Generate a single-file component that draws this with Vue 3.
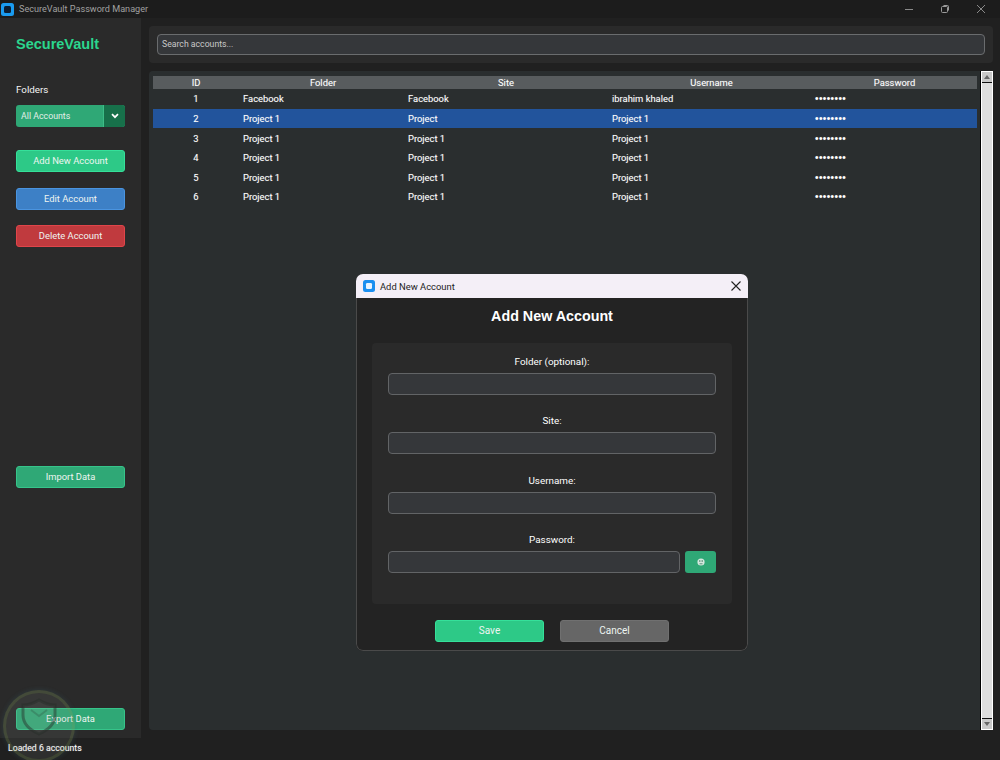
<script setup>
const rows = [
  { id: 1, folder: 'Facebook', site: 'Facebook', user: 'ibrahim khaled' },
  { id: 2, folder: 'Project 1', site: 'Project', user: 'Project 1', selected: true },
  { id: 3, folder: 'Project 1', site: 'Project 1', user: 'Project 1' },
  { id: 4, folder: 'Project 1', site: 'Project 1', user: 'Project 1' },
  { id: 5, folder: 'Project 1', site: 'Project 1', user: 'Project 1' },
  { id: 6, folder: 'Project 1', site: 'Project 1', user: 'Project 1' }
]
const fields = ['Folder (optional):', 'Site:', 'Username:']
</script>

<template>
  <div class="window">
    <header class="titlebar">
      <svg class="app-icon" width="13" height="13" viewBox="0 0 13 13">
        <rect width="13" height="13" rx="2.5" fill="#1a9bf0" />
        <rect x="3" y="3" width="7" height="7" rx="1.5" fill="#0b1e33" />
      </svg>
      <span class="title-text">SecureVault Password Manager</span>
      <div class="win-controls">
        <svg width="10" height="10" viewBox="0 0 10 10"><path d="M1 5.5h8" stroke="#8a8a8a" /></svg>
        <svg width="10" height="10" viewBox="0 0 10 10" fill="none" stroke="#9a9a9a"><rect x="1.5" y="2.5" width="6" height="6" rx="1" /><path d="M3.5 1.5h4a1 1 0 0 1 1 1v4" /></svg>
        <svg width="10" height="10" viewBox="0 0 10 10"><path d="M1 1l8 8M9 1l-8 8" stroke="#8a8a8a" /></svg>
      </div>
    </header>

    <div class="body">
      <aside class="sidebar">
        <h1 class="brand">SecureVault</h1>
        <div class="folders-label">Folders</div>
        <div class="combo">
          <span class="combo-text">All Accounts</span>
          <span class="combo-arrow">
            <svg width="8" height="6" viewBox="0 0 8 6"><path d="M1 1.2l3 3 3-3" fill="none" stroke="#fff" stroke-width="1.7" /></svg>
          </span>
        </div>
        <button class="btn side-btn green">Add New Account</button>
        <button class="btn side-btn blue">Edit Account</button>
        <button class="btn side-btn red">Delete Account</button>
        <button class="btn side-btn teal import">Import Data</button>
        <button class="btn side-btn teal export">Export Data</button>
      </aside>

      <main class="main">
        <div class="search-panel">
          <div class="search">Search accounts...</div>
        </div>
        <div class="table-panel">
          <div class="table">
            <div class="row head">
              <span class="c-id">ID</span>
              <span class="c-folder">Folder</span>
              <span class="c-site">Site</span>
              <span class="c-user">Username</span>
              <span class="c-pass">Password</span>
            </div>
            <div v-for="r in rows" :key="r.id" class="row" :class="{ selected: r.selected }">
              <span class="c-id">{{ r.id }}</span>
              <span class="c-folder">{{ r.folder }}</span>
              <span class="c-site">{{ r.site }}</span>
              <span class="c-user">{{ r.user }}</span>
              <span class="c-pass dots">••••••••</span>
            </div>
          </div>
          <div class="scrollbar">
            <span class="sb-btn"><i class="tri up"></i></span>
            <span class="sb-track"></span>
            <span class="sb-btn"><i class="tri down"></i></span>
          </div>
        </div>
      </main>
    </div>

    <footer class="status">Loaded 6 accounts</footer>

    <section class="dialog">
      <div class="dlg-title">
        <svg width="12" height="12" viewBox="0 0 12 12">
          <rect width="12" height="12" rx="2.5" fill="#1a8ff0" />
          <rect x="3" y="3" width="6" height="6" rx="1.2" fill="#e8f4ff" />
        </svg>
        <span>Add New Account</span>
        <svg class="dlg-close" width="10" height="10" viewBox="0 0 10 10"><path d="M.5.5l9 9M9.5.5l-9 9" stroke="#222" stroke-width="1.1" /></svg>
      </div>
      <div class="dlg-body">
        <h2 class="dlg-heading">Add New Account</h2>
        <div class="form">
          <div v-for="f in fields" :key="f" class="field">
            <label>{{ f }}</label>
            <div class="input"></div>
          </div>
          <div class="field">
            <label>Password:</label>
            <div class="pw-row">
              <div class="input"></div>
              <button class="eye">
                <svg width="8" height="8" viewBox="0 0 8 8">
                  <circle cx="4" cy="4" r="3.6" fill="#d5e8df" />
                  <circle cx="2.8" cy="3" r=".8" fill="#3d7a62" />
                  <circle cx="5.2" cy="3" r=".8" fill="#3d7a62" />
                  <path d="M2.5 5.800h3" stroke="#3d7a62" stroke-width=".8" />
                </svg>
              </button>
            </div>
          </div>
        </div>
        <div class="dlg-actions">
          <button class="btn dlg-btn green">Save</button>
          <button class="btn dlg-btn gray">Cancel</button>
        </div>
      </div>
    </section>

    <div class="watermark">
      <svg width="40" height="38" viewBox="0 0 40 38">
        <path d="M20 2c5 3 11 5 16 5v10c0 9-7 15-16 19C11 32 4 26 4 17V7c5 0 11-2 16-5z" fill="rgba(200,210,200,.05)" stroke="#262c28" stroke-opacity=".45" stroke-width="3" />
        <path d="M12 12l8 6 8-6" fill="none" stroke="#262c28" stroke-opacity=".22" stroke-width="2" />
      </svg>
    </div>
  </div>
</template>

<style>
html, body { margin: 0; background: #202020; }
</style>

<style scoped>
.window {
  position: relative;
  width: 1000px;
  height: 760px;
  overflow: hidden;
  display: flex;
  flex-direction: column;
  background: #202020;
  color: #fff;
  font-family: Roboto, "Liberation Sans", sans-serif;
  font-size: 10px;
}
.titlebar {
  height: 18px;
  flex: none;
  display: flex;
  align-items: center;
  gap: 5px;
  padding-left: 1px;
  background: #1c1c1c;
  color: #a0a0a0;
  font-size: 9.1px;
}
.app-icon { flex: none; }
.win-controls {
  margin-left: auto;
  display: flex;
  gap: 26px;
  padding-right: 14px;
}
.body {
  flex: 1;
  min-height: 0;
  display: flex;
}
.sidebar {
  width: 141px;
  flex: none;
  box-sizing: border-box;
  padding: 17px 16px 8px;
  display: flex;
  flex-direction: column;
  background: #2a2a2a;
}
.brand {
  margin: 0;
  font: bold 14.500px/18px "Liberation Sans", sans-serif;
  color: #2bd68e;
}
.folders-label {
  margin-top: 31px;
  font-size: 9.8px;
  line-height: 12px;
  color: #f4f4f4;
}
.combo {
  margin-top: 9px;
  height: 22px;
  display: flex;
  border-radius: 3px;
  overflow: hidden;
  background: #2fa876;
}
.combo-text {
  flex: 1;
  padding-left: 5px;
  line-height: 22px;
  font-size: 8.8px;
  color: #e3efe9;
  border-right: 1px solid #3dbd87;
}
.combo-arrow {
  width: 21px;
  display: flex;
  align-items: center;
  justify-content: center;
  background: #17704a;
}
.btn {
  box-sizing: border-box;
  border-radius: 3px;
  padding: 0;
  font: inherit;
  color: #eef5f1;
}
.side-btn { height: 22px; width: 109px; font-size: 9.4px; padding-bottom: 2px; }
.green { background: #2dc987; border: 1px solid #35e09a; }
.blue { background: #3d80c6; border: 1px solid #4a94e0; }
.red { background: #c03a3e; border: 1px solid #e0454a; }
.teal { background: #2fa876; border: 1px solid #36c48a; }
.gray { background: #666; border: 1px solid #707070; }
.green.side-btn { margin-top: 23px; }
.blue.side-btn { margin-top: 16px; }
.red.side-btn { margin-top: 15px; }
.import { margin-top: 219px; }
.export { margin-top: auto; }

.main {
  flex: 1;
  min-width: 0;
  box-sizing: border-box;
  padding: 8px 7px 8px 8px;
  display: flex;
  flex-direction: column;
  gap: 8px;
}
.search-panel {
  height: 37px;
  flex: none;
  box-sizing: border-box;
  padding: 8px;
  border-radius: 4px;
  background: #2a2a2a;
}
.search {
  height: 21px;
  box-sizing: border-box;
  padding-left: 4px;
  line-height: 19px;
  font-size: 8.7px;
  color: #c8c8c8;
  background: #35373a;
  border: 1px solid #6a6c6e;
  border-radius: 4px;
}
.table-panel {
  flex: 1;
  min-height: 0;
  display: flex;
  border-radius: 4px 0 0 4px;
  background: #2a2e2f;
}
.table {
  flex: 1;
  min-width: 0;
  padding: 5px 4px 0;
}
.row {
  height: 19.6px;
  box-sizing: border-box;
  padding-top: .3px;
  display: flex;
  align-items: center;
  font-size: 9.4px;
  text-shadow: 0 0 1px rgba(255, 255, 255, .35);
}
.row.head {
  height: 13px;
  padding-top: 0;
  background: #585c5e;
}
.row.selected { background: #22549c; }
.c-id { width: 90px; flex: none; text-align: center; padding-right: 4px; box-sizing: border-box; }
.c-folder { width: 165px; flex: none; }
.c-site { width: 204px; flex: none; }
.c-user { width: 203px; flex: none; }
.c-pass { flex: 1; }
.head span { text-align: center; }
.head .c-folder { padding-right: 5px; box-sizing: border-box; }
.head .c-site { padding-right: 8px; box-sizing: border-box; }
.head .c-user { padding-right: 4px; box-sizing: border-box; }
.head .c-pass { padding-right: 3px; box-sizing: border-box; }
.dots { font: 10px "Liberation Sans", sans-serif; letter-spacing: .4px; }
.scrollbar {
  width: 12px;
  flex: none;
  box-sizing: border-box;
  display: flex;
  flex-direction: column;
  gap: 1px;
  background: #111;
  border: 1px solid #fff;
  box-shadow: -1px 0 0 #000;
}
.sb-btn {
  height: 10px;
  flex: none;
  display: flex;
  align-items: center;
  justify-content: center;
  background: #c8c8c8;
}
.sb-track { flex: 1; background: #dedede; }
.tri { width: 0; height: 0; border-left: 3px solid transparent; border-right: 3px solid transparent; }
.tri.up { border-bottom: 4px solid #666; }
.tri.down { border-top: 4px solid #666; }

.status {
  height: 22px;
  flex: none;
  padding-left: 8px;
  line-height: 21px;
  font-size: 8.700px;
  text-shadow: 0 0 1px rgba(255, 255, 255, .5);
  background: #202020;
}

.dialog {
  position: absolute;
  left: 356px;
  top: 274px;
  width: 392px;
  height: 377px;
  border-radius: 7px;
  overflow: hidden;
  background: #232323;
  display: flex;
  flex-direction: column;
}
.dlg-title {
  height: 24px;
  flex: none;
  box-sizing: border-box;
  padding: 0 7px;
  display: flex;
  align-items: center;
  gap: 5px;
  background: #f4eff7;
  color: #222;
  font-size: 9.4px;
}
.dlg-close { margin-left: auto; }
.dlg-body {
  flex: 1;
  min-height: 0;
  box-sizing: border-box;
  padding: 0 15px;
  border: 1px solid #4a4a4a;
  border-top: 0;
  border-radius: 0 0 7px 7px;
  display: flex;
  flex-direction: column;
}
.dlg-heading {
  margin: 0;
  height: 45px;
  font: bold 14.300px/36px "Liberation Sans", sans-serif;
  text-align: center;
  color: #fff;
}
.form {
  height: 261px;
  box-sizing: border-box;
  padding: 13px 16px 0;
  border-radius: 4px;
  background: #2a2a2a;
  display: flex;
  flex-direction: column;
  gap: 20.33px;
}
.field label {
  display: block;
  height: 12px;
  line-height: 12px;
  margin-bottom: 5px;
  text-align: center;
  font-size: 9.9px;
}
.input {
  height: 22px;
  flex: 1;
  box-sizing: border-box;
  border: 1px solid #626466;
  border-radius: 4px;
  background: #35373a;
}
.pw-row { display: flex; gap: 5px; }
.eye {
  width: 31px;
  height: 22px;
  padding: 0;
  border: 0;
  border-radius: 3px;
  background: #2fa876;
  display: flex;
  align-items: center;
  justify-content: center;
}
.dlg-actions {
  margin-top: 16px;
  display: flex;
  justify-content: center;
  gap: 16px;
}
.dlg-btn { width: 109px; height: 22px; font-size: 10px; padding-bottom: 1px; }

.watermark {
  position: absolute;
  left: 3px;
  top: 690px;
  width: 72px;
  height: 72px;
  box-sizing: border-box;
  padding-top: 5px;
  border-radius: 50%;
  display: flex;
  align-items: flex-start;
  justify-content: center;
  background: rgba(150, 155, 150, .12);
  border: 3px solid rgba(120, 150, 70, .2);
  box-shadow: 0 0 4px 1px rgba(60, 110, 130, .18);
  pointer-events: none;
}
</style>
